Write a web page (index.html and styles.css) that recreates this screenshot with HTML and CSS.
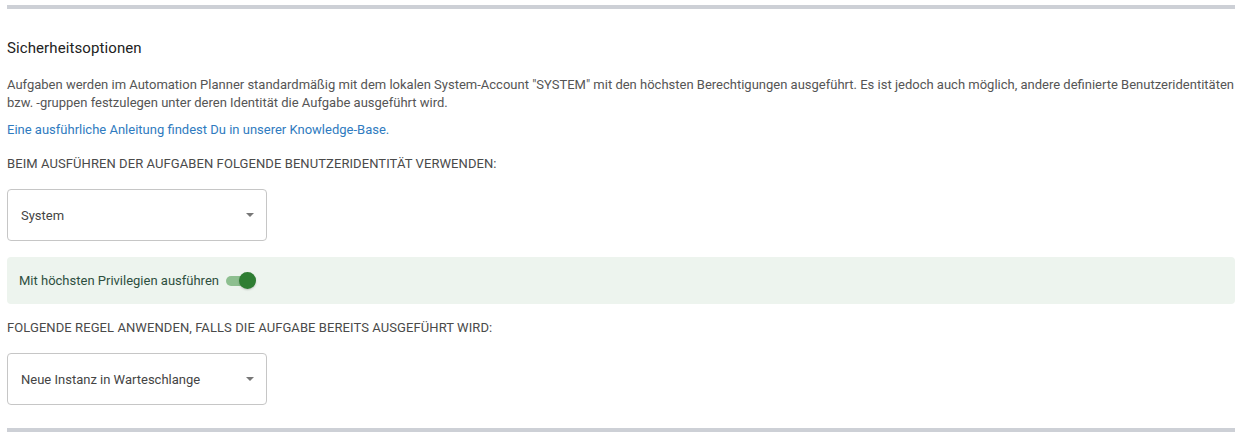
FILE: index.html
```html
<!DOCTYPE html>
<html lang="de">
<head>
<meta charset="utf-8">
<link rel="stylesheet" href="styles.css">
</head>
<body>
<div class="page">
  <div class="bar bar-top"></div>
  <h2 class="title">Sicherheitsoptionen</h2>
  <p class="desc">Aufgaben werden im Automation Planner standardmäßig mit dem lokalen System-Account "SYSTEM" mit den höchsten Berechtigungen ausgeführt. Es ist jedoch auch möglich, andere definierte Benutzeridentitäten bzw. -gruppen festzulegen unter deren Identität die Aufgabe ausgeführt wird.</p>
  <a class="link" href="#">Eine ausführliche Anleitung findest Du in unserer Knowledge-Base.</a>
  <div class="label">Beim Ausführen der Aufgaben folgende Benutzeridentität verwenden:</div>
  <div class="select">
    <span class="select-value">System</span>
    <span class="caret"></span>
  </div>
  <div class="notice">
    <span class="notice-text">Mit höchsten Privilegien ausführen</span>
    <span class="toggle"><span class="track"></span><span class="thumb"></span></span>
  </div>
  <div class="label label-2">Folgende Regel anwenden, falls die Aufgabe bereits ausgeführt wird:</div>
  <div class="select">
    <span class="select-value">Neue Instanz in Warteschlange</span>
    <span class="caret"></span>
  </div>
  <div class="bar bar-bottom"></div>
</div>
</body>
</html>
```
FILE: styles.css
```css
* { box-sizing: border-box; }
html, body { margin: 0; padding: 0; background: #fff; }
body { font-family: Roboto, "Noto Sans", "Liberation Sans", sans-serif; color: #555; }
.page { width: 1228px; margin-left: 7px; display: flex; flex-direction: column; align-items: flex-start; }
.bar { width: 100%; height: 4px; background: #cdd0d6; }
.bar-top { margin-top: 5px; }
.title { margin: 29px 0 0; font-size: 15px; line-height: 20px; font-weight: 400; color: #222; letter-spacing: 0.1px; }
.desc { margin: 18px 0 0; font-size: 13px; line-height: 18px; color: #555; }
.link { margin-top: 9px; font-size: 13px; line-height: 18px; color: #2f7bc0; text-decoration: none; }
.label { margin-top: 16px; font-size: 13px; line-height: 18px; text-transform: uppercase; color: #4a4a4a; letter-spacing: 0.08px; }
.label-2 { margin-top: 15px; }
.select { margin-top: 16px; width: 260px; height: 52px; border: 1px solid #c6c6c6; border-radius: 4px; display: flex; align-items: center; justify-content: space-between; padding: 0 12px 0 13px; }
.select-value { font-size: 13px; color: #444; }
.caret { width: 0; height: 0; border-left: 4px solid transparent; border-right: 4px solid transparent; border-top: 4px solid #777; }
.notice { margin-top: 16px; width: 100%; height: 47px; background: #edf4ee; border-radius: 4px; display: flex; align-items: center; padding-left: 12px; gap: 7px; }
.notice-text { font-size: 13px; color: #2e4f3e; }
.toggle { position: relative; width: 30px; height: 16px; display: inline-block; }
.track { position: absolute; left: 0; top: 3px; width: 26px; height: 10px; border-radius: 5px; background: #8dbf8f; }
.thumb { position: absolute; left: 13px; top: -1px; width: 17px; height: 17px; border-radius: 50%; background: #2e7d32; box-shadow: 0 1px 2px rgba(0,0,0,0.2); }
.bar-bottom { margin-top: 23px; }
```
